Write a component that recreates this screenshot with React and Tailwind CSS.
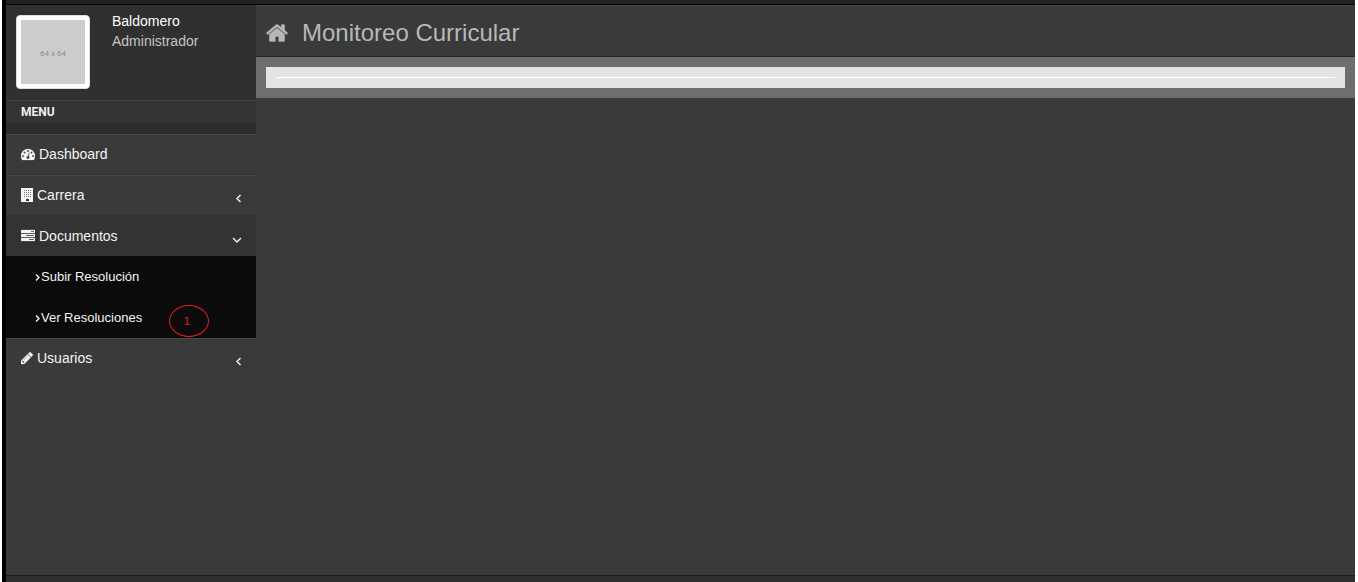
import React from "react";

const shapes = {
  home: "M1472 992v480q0 26-19 45t-45 19h-384v-384h-256v384h-384q-26 0-45-19t-19-45v-480q0-1 .5-3t.5-3l575-474 575 474q1 2 1 6zm223-69l-62 74q-8 9-21 11h-3q-13 0-21-7l-692-577-692 577q-12 8-24 7-13-2-21-11l-62-74q-8-10-7-23.5t11-21.5l719-599q32-26 76-26t76 26l244 204v-195q0-14 9-23t23-9h192q14 0 23 9t9 23v408l219 182q10 8 11 21.5t-7 23.5z",
  gauge: "M384 1152q0-53-37.5-90.5t-90.5-37.5-90.5 37.5-37.5 90.5 37.5 90.5 90.5 37.5 90.5-37.5 37.5-90.5zm192-448q0-53-37.5-90.5t-90.5-37.5-90.5 37.5-37.5 90.5 37.5 90.5 90.5 37.5 90.5-37.5 37.5-90.5zm428 481l101-382q6-26-7.5-48.5t-38.5-29.5-48 6.5-30 39.5l-101 382q-60 5-107 43.5t-63 98.5q-20 77 20 146t117 89 146-20 89-117q16-60-6-117t-72-91zm660-33q0-53-37.5-90.5t-90.5-37.5-90.5 37.5-37.5 90.5 37.5 90.5 90.5 37.5 90.5-37.5 37.5-90.5zm-640-640q0-53-37.5-90.5t-90.5-37.5-90.5 37.5-37.5 90.5 37.5 90.5 90.5 37.5 90.5-37.5 37.5-90.5zm448 192q0-53-37.5-90.5t-90.5-37.5-90.5 37.5-37.5 90.5 37.5 90.5 90.5 37.5 90.5-37.5 37.5-90.5zm320 448q0 261-141 483-19 29-54 29h-1402q-35 0-54-29-141-221-141-483 0-182 71-348t191-286 286-191 348-71 348 71 286 191 191 286 71 348z",
  tasks: "M1024 1408h640v-128h-640v128zm-384-512h1024v-128h-1024v128zm640-512h384v-128h-384v128zm512 832v256q0 26-19 45t-45 19h-1664q-26 0-45-19t-19-45v-256q0-26 19-45t45-19h1664q26 0 45 19t19 45zm0-512v256q0 26-19 45t-45 19h-1664q-26 0-45-19t-19-45v-256q0-26 19-45t45-19h1664q26 0 45 19t19 45zm0-512v256q0 26-19 45t-45 19h-1664q-26 0-45-19t-19-45v-256q0-26 19-45t45-19h1664q26 0 45 19t19 45z",
  pencil: "M491 1536l91-91-235-235-91 91v107h128v128h107zm523-928q0-22-22-22-10 0-17 7l-542 542q-7 7-7 17 0 22 22 22 10 0 17-7l542-542q7-7 7-17zm-54-192l416 416-832 832h-416v-416zm683 96q0 53-37 90l-166 166-416-416 166-165q36-38 90-38 53 0 91 38l235 234q37 39 37 91z",
};

function Glyph({ name, viewBox = "0 0 1792 1792", className }) {
  return (
    <svg viewBox={viewBox} fill="currentColor" stroke="currentColor" strokeWidth="30" aria-hidden="true" className={className}>
      <path d={shapes[name]} />
    </svg>
  );
}

function Building() {
  return (
    <svg viewBox="0 0 12 14" aria-hidden="true" shapeRendering="crispEdges" className="h-3.5 w-3">
      <path fill="currentColor" d="M0 0h12v14H0z" />
      <path
        stroke="#77708a"
        strokeWidth="1"
        strokeDasharray="1 1"
        d="M3 2.5h7M3 4.5h7M3 6.5h7M3 8.5h7"
      />
      <path fill="#333333" d="M5 11h3v2H5z" />
    </svg>
  );
}

function Chevron({ direction }) {
  const paths = { left: "M6.5 2L3 5.5 6.5 9", down: "M1 4l4 4 4-4", right: "M1 2.5l3 3-3 3" };
  const sizes = { left: "h-2.5 w-2", down: "h-2.5 w-2.5", right: "h-2.5 w-1.5" };
  const boxes = { left: "0 0 8 10", down: "0 0 10 10", right: "0 0 6 10" };
  return (
    <svg viewBox={boxes[direction]} fill="none" stroke="currentColor" strokeWidth="1.4" aria-hidden="true" className={sizes[direction]}>
      <path d={paths[direction]} />
    </svg>
  );
}

const rowBase =
  "flex w-full cursor-pointer items-center gap-1 pr-3.5 pl-[15px] text-left text-[14px] leading-5 text-[#f4f4f4]";
const closedRow = rowBase + " h-[41px] border-t border-b border-t-[#474747] border-b-[#333333] pb-0.5";

export default function App() {
  return (
    <div className="flex min-h-screen flex-col border-r-[3px] border-l-2 border-white bg-[#3a3a3a] font-['Liberation_Sans',Arial,sans-serif] text-[14px] leading-5">
      <div className="flex flex-1 flex-col border-l-4 border-black">
        <div className="h-[5px] border-b border-black bg-[#222222]" />
        <div className="flex flex-1">
          <aside className="w-[250px] shrink-0">
            <div className="flex h-[95px] gap-[22px] bg-[#303030] px-2.5 pt-2.5">
              <div className="flex size-[74px] items-center justify-center rounded border border-[#dddddd] bg-white p-1">
                <div className="flex size-16 items-center justify-center bg-[#cccccc] pt-1 font-['Roboto',sans-serif] text-[8px] text-[#8e8e8e]">
                  64 x 64
                </div>
              </div>
              <div className="-mt-1">
                <div className="text-white">Baldomero</div>
                <div className="text-[#c4c4c4]">Administrador</div>
              </div>
            </div>
            <h2 className="flex h-[23px] items-center border-t border-[#404040] bg-[#343434] px-[15px] font-['Roboto',sans-serif] text-[12px] font-bold text-[#f0f0f0]">
              MENU
            </h2>
            <div className="h-[11px] bg-[#2d2d2d]" />
            <nav>
              <ul>
                <li>
                  <a href="#dashboard" className={closedRow}>
                    <Glyph name="gauge" className="size-3.5" />
                    Dashboard
                  </a>
                </li>
                <li>
                  <button type="button" className={closedRow}>
                    <Building />
                    <span className="flex-1">Carrera</span>
                    <span className="pt-1.5"><Chevron direction="left" /></span>
                  </button>
                </li>
                <li>
                  <button type="button" aria-expanded="true" className={rowBase + " h-10 bg-[#333333]"}>
                    <Glyph name="tasks" className="size-3.5" />
                    <span className="flex-1">Documentos</span>
                    <span className="pt-1.5"><Chevron direction="down" /></span>
                  </button>
                  <ul className="bg-[#0b0b0b] text-[13px] text-[#f4f4f4]">
                    <li>
                      <a href="#subir" className="flex h-[41px] items-center pl-[29px]">
                        <Chevron direction="right" />
                        Subir Resolución
                      </a>
                    </li>
                    <li className="relative">
                      <a href="#ver" className="flex h-[41px] items-center pl-[29px]">
                        <Chevron direction="right" />
                        Ver Resoluciones
                      </a>
                      <span className="absolute top-2 left-[163px] flex h-8 w-10 items-center justify-center rounded-[50%] border border-[#ed1c24] pt-0.5 pr-1 font-['DejaVu_Sans',sans-serif] text-[10px] text-[#ed1c24]">
                        1
                      </span>
                    </li>
                  </ul>
                </li>
                <li>
                  <button type="button" className={rowBase + " h-[41px] border-t border-[#474747] pb-0.5"}>
                    <Glyph name="pencil" viewBox="128 0 1536 1792" className="h-3.5 w-3" />
                    <span className="flex-1">Usuarios</span>
                    <span className="pt-1.5"><Chevron direction="left" /></span>
                  </button>
                </li>
              </ul>
            </nav>
          </aside>
          <main className="min-w-0 flex-1">
            <header className="flex h-[52px] items-center gap-3.5 border-t border-b border-t-[#444444] border-b-[#252525] px-2.5 pt-1 text-[#b8b8b8]">
              <Glyph name="home" viewBox="64 0 1664 1792" className="h-6 w-[22px]" />
              <h1 className="text-[24px] leading-10">Monitoreo Curricular</h1>
            </header>
            <section className="bg-[#6e6e6e] p-2.5">
              <div className="bg-[#e4e4e4] p-2.5">
                <hr className="border-white" />
              </div>
            </section>
          </main>
        </div>
        <footer className="h-[7px] border-t border-[#1c1c1c] bg-[#303030]" />
      </div>
    </div>
  );
}
